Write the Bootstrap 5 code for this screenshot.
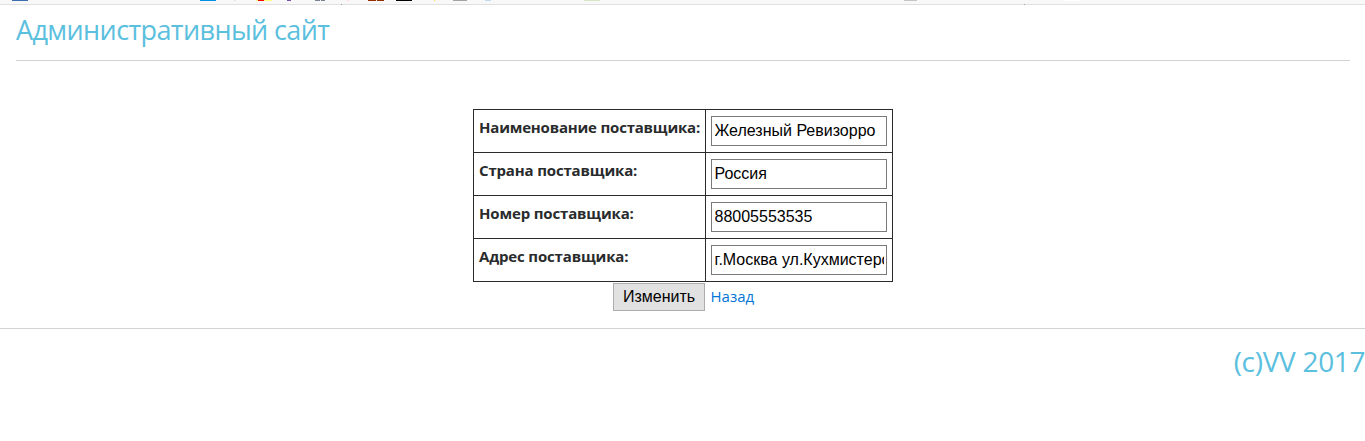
<!DOCTYPE html>
<html lang="ru">
<head>
<meta charset="utf-8">
<meta name="viewport" content="width=device-width, initial-scale=1">
<title>Административный сайт</title>
<link href="https://cdn.jsdelivr.net/npm/bootstrap@5.3.0/dist/css/bootstrap.min.css" rel="stylesheet">
<style>
body{font-family:"Open Sans","Noto Sans",sans-serif;font-size:15px;line-height:22px;color:#292b2c;overflow:hidden}
.bookmarks{height:5px;background:#f8f8f8}
.site-title{color:#5bc0de;font-size:27px;line-height:31px;font-weight:400;white-space:nowrap}
.site-head{height:56px;margin:0 15px 0 16px;padding-top:9px;border-bottom:1px solid #d0d4d4}
.site-title span{letter-spacing:-.61px}
.edit-form{width:420px;margin-top:48px}
.supplier{border-collapse:collapse;width:420px;table-layout:fixed}
.supplier td{border:1px solid #292b2c;height:43px;padding:0;vertical-align:top}
.supplier .label-cell{width:232px;padding:6px 0 0 5.5px;font-weight:700;white-space:nowrap;letter-spacing:-.16px}
.supplier .label-cell.wide{letter-spacing:-.2px}
.supplier .field-cell{padding:6px 0 0 5px}
.supplier input{display:block;width:176px;height:30px;padding:1px 2px 1px 3px;border:1px solid #7a7a7a;border-radius:0;background:#fff;color:#000;font:16px "Liberation Sans",sans-serif}
.actions{margin-top:1px;padding-left:140px;gap:6px}
.save{width:92px;height:28px;padding:0 0 0 1px;border:1px solid #adadad;background:#e1e1e1;color:#000;font:16px "Liberation Sans",sans-serif}
.back{color:#0275d8;margin-top:-2px}
.site-foot{margin-top:17px;padding-top:17px;border-top:1px solid #d0d4d4;font-size:28px}
.site-foot span{letter-spacing:-.3px;margin-right:-.3px}
</style>
</head>
<body class="bg-white">
<div class="bookmarks"><svg class="d-block" width="1365" height="5" shape-rendering="crispEdges" aria-hidden="true">
<path fill="#e0e0e0" d="M0 4h1365v1H0z"/><path fill="#a0a0a0" d="M341 4h1v1h-1zM1024 4h1v1h-1z"/>
<path fill="#3f6cb0" d="M12 0h16v1H12z"/><path fill="#0090e8" d="M200 0h16v1h-16z"/><path fill="#e5e5e5" d="M234 0h2v1h-2z"/>
<path fill="#ffff80" d="M256 0h16v1h-16z"/><path fill="#f00" d="M258 0h6v1h-6z"/><path fill="#7a50b0" d="M287 0h4v1h-4z"/>
<path fill="#7a8494" d="M315 0h5v1h-5zM321 0h4v1h-4z"/><path fill="#ffdce4" d="M347 0h2v1h-2z"/><path fill="#932e00" d="M368 0h8v1h-8zM377 0h7v1h-7z"/>
<path d="M396 0h16v1h-16z"/><path fill="#ffdf35" d="M434 0h1v1h-1z"/><path fill="#a3a3a3" d="M453 0h14v1h-14z"/>
<path fill="#c5d5f5" d="M485 0h6v1h-6z"/><path fill="#d8e5c5" d="M584 0h16v1h-16z"/><path fill="#c5c5c5" d="M904 0h13v1h-13z"/><path fill="#fff" d="M1064 0h16v1h-16z"/>
</svg></div>
<header class="site-head"><h1 class="site-title mb-0"><span>Административный сайт</span></h1></header>
<form class="edit-form mx-auto">
<table class="supplier">
<tr><td class="label-cell wide">Наименование поставщика:</td><td class="field-cell"><input type="text" value="Железный Ревизорро"></td></tr>
<tr><td class="label-cell">Страна поставщика:</td><td class="field-cell"><input type="text" value="Россия"></td></tr>
<tr><td class="label-cell">Номер поставщика:</td><td class="field-cell"><input type="text" value="88005553535"></td></tr>
<tr><td class="label-cell">Адрес поставщика:</td><td class="field-cell"><input type="text" value="г.Москва ул.Кухмистерова"></td></tr>
</table>
<div class="actions d-flex align-items-center"><button class="save" type="button">Изменить</button><a class="back text-decoration-none" href="#">Назад</a></div>
</form>
<footer class="site-foot site-title text-end"><span>(c)VV 2017</span></footer>
</body>
</html>
